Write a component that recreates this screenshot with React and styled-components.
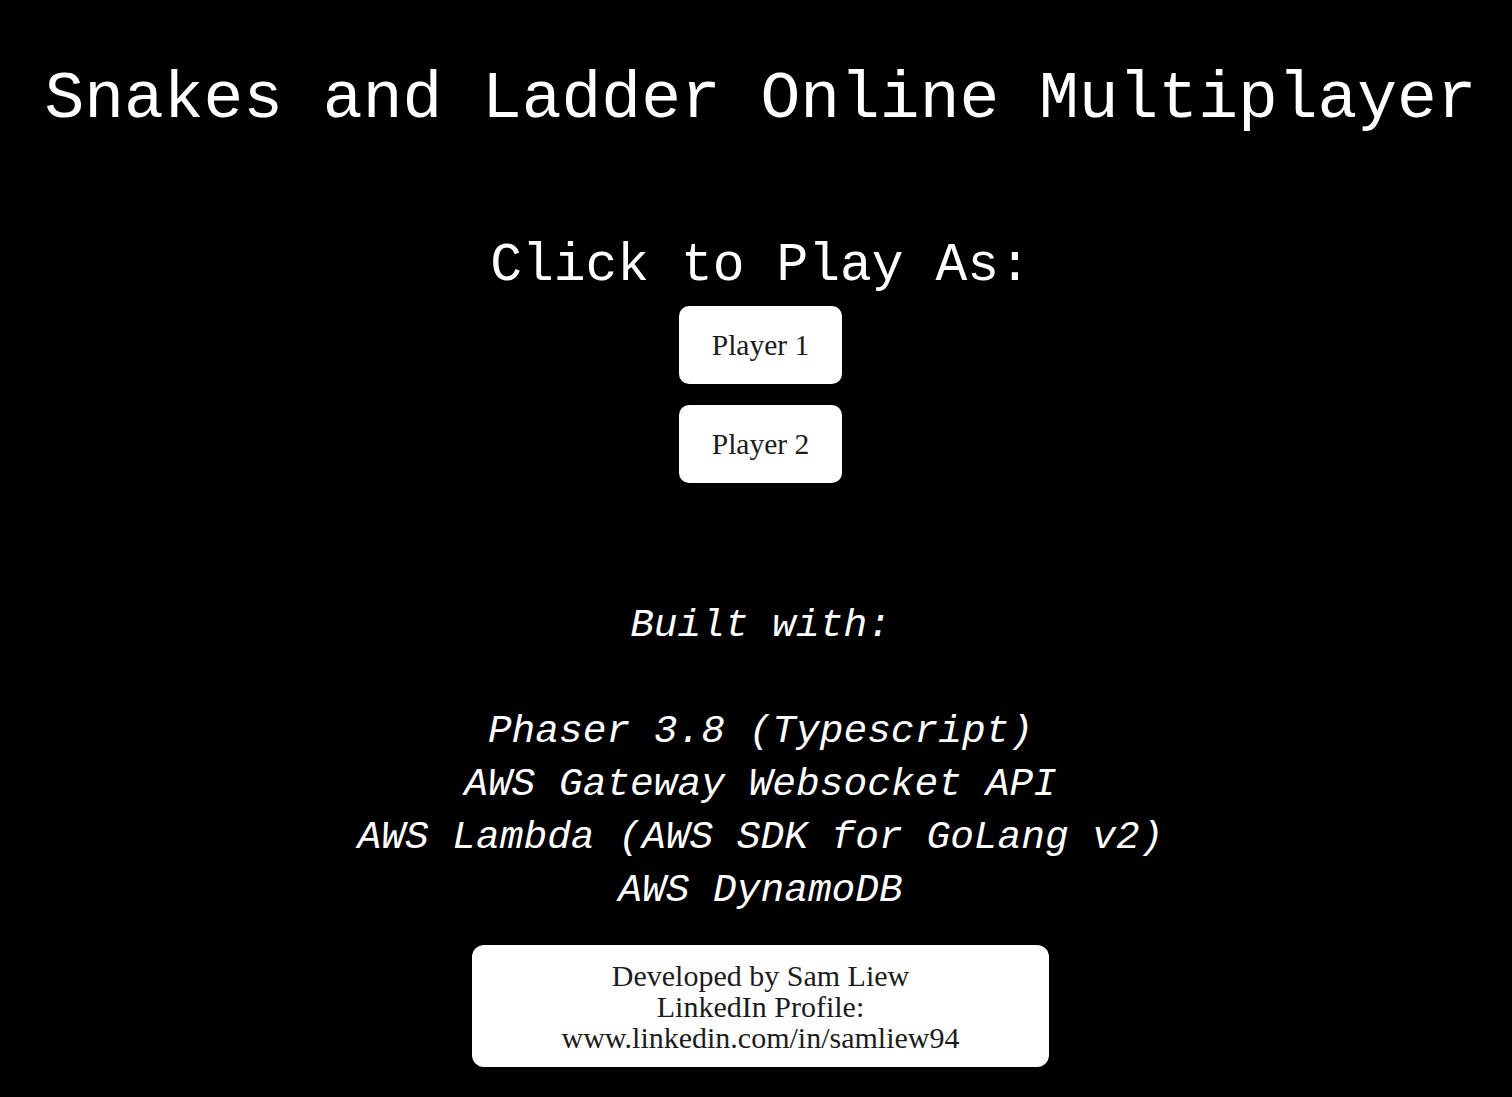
import styled, { createGlobalStyle } from 'styled-components';

const GlobalStyle = createGlobalStyle`
  html, body {
    margin: 0;
    padding: 0;
    background: #000;
  }
`;

const Page = styled.main`
  min-height: 1097px;
  padding-left: 9px;
  display: flex;
  flex-direction: column;
  align-items: center;
  color: #fff;
  font-family: 'Liberation Mono', 'Courier New', monospace;
`;

const Title = styled.h1`
  margin: 67px 0 0;
  font-size: 66.3px;
  line-height: 66px;
  font-weight: normal;
  white-space: nowrap;
`;

const Subtitle = styled.h2`
  margin: 107px 0 14px;
  font-size: 53px;
  line-height: 52px;
  font-weight: normal;
`;

const PlayerList = styled.div`
  display: flex;
  flex-direction: column;
  gap: 21px;
`;

const PlayerButton = styled.button`
  width: 163px;
  height: 78px;
  border: none;
  border-radius: 10px;
  background: #fff;
  color: #1c1c1c;
  font-family: 'Liberation Serif', 'Times New Roman', serif;
  font-size: 29.5px;
  cursor: pointer;
`;

const Credits = styled.section`
  margin-top: 116px;
  font-size: 39.5px;
  line-height: 53px;
  font-style: italic;
  text-align: center;
  white-space: pre;
`;

const Footer = styled.footer`
  margin-top: 28px;
  box-sizing: border-box;
  width: 577px;
  height: 122px;
  padding-top: 15px;
  border-radius: 12px;
  background: #fff;
  color: #1c1c1c;
  font-family: 'Liberation Serif', 'Times New Roman', serif;
  font-size: 30px;
  line-height: 31px;
  text-align: center;
`;

const tech = [
  'Phaser 3.8 (Typescript)',
  'AWS Gateway Websocket API',
  'AWS Lambda (AWS SDK for GoLang v2)',
  'AWS DynamoDB',
];

const App = () => {
  return (
    <>
      <GlobalStyle />
      <Page>
        <Title>Snakes and Ladder Online Multiplayer</Title>
        <Subtitle>Click to Play As:</Subtitle>
        <PlayerList>
          <PlayerButton>Player 1</PlayerButton>
          <PlayerButton>Player 2</PlayerButton>
        </PlayerList>
        <Credits>{['Built with:', '', ...tech].join('\n')}</Credits>
        <Footer>
          Developed by Sam Liew
          <br />
          LinkedIn Profile:
          <br />
          www.linkedin.com/in/samliew94
        </Footer>
      </Page>
    </>
  );
};

export default App;
